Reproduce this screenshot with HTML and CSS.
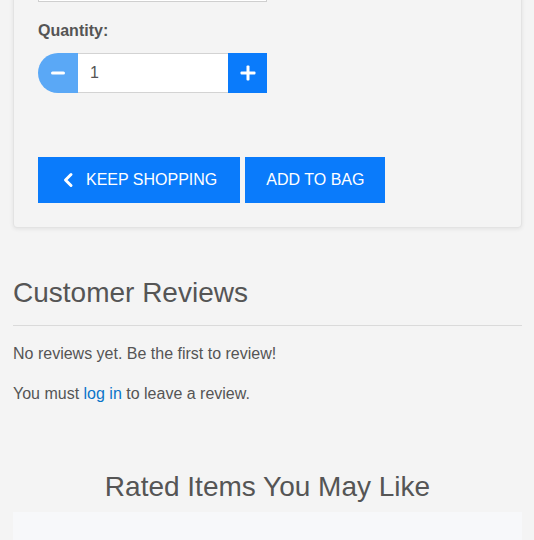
FILE: index.html
```html
<!DOCTYPE html>
<html>
<head>
<meta charset="utf-8">
<link rel="stylesheet" href="styles.css">
</head>
<body>
<div class="page">
  <div class="card">
    <div class="select"></div>
    <label class="qty-label">Quantity:</label>
    <div class="qty">
      <button class="qty-btn minus" aria-label="decrease">
        <svg width="16" height="16" viewBox="0 0 16 16"><rect x="1" y="6.5" width="14" height="3" rx="1.5" fill="#fff"/></svg>
      </button>
      <div class="qty-input">1</div>
      <button class="qty-btn plus" aria-label="increase">
        <svg width="18" height="18" viewBox="0 0 18 18"><rect x="1.5" y="7.5" width="15" height="3" rx="1" fill="#fff"/><rect x="7.5" y="1.5" width="3" height="15" rx="1" fill="#fff"/></svg>
      </button>
    </div>
    <div class="actions">
      <button class="btn keep">
        <svg class="chev" width="12" height="16" viewBox="0 0 12 16"><polyline points="9,2.5 3.5,8 9,13.5" fill="none" stroke="#fff" stroke-width="3" stroke-linecap="round" stroke-linejoin="round"/></svg>
        <span>KEEP SHOPPING</span>
      </button>
      <button class="btn add">ADD TO BAG</button>
    </div>
  </div>

  <section class="reviews">
    <h2 class="reviews-title">Customer Reviews</h2>
    <hr class="rule">
    <p class="text">No reviews yet. Be the first to review!</p>
    <p class="text">You must <a href="#" class="link">log in</a> to leave a review.</p>
  </section>

  <section class="rated">
    <h2 class="rated-title">Rated Items You May Like</h2>
    <div class="rated-box"></div>
  </section>
</div>
</body>
</html>
```

FILE: styles.css
```css
html, body {
  margin: 0;
  padding: 0;
  background: #f4f4f4;
  font-family: "Liberation Sans", Arial, sans-serif;
  color: #555;
  overflow: hidden;
}

.page {
  margin: 0 12px 0 13px;
}

.card {
  margin-top: -60px;
  padding: 21px 24px 24px;
  border: 1px solid #e3e3e3;
  border-radius: 4px;
  box-shadow: 0 1px 4px rgba(0, 0, 0, 0.08);
  background: #f4f4f4;
}

.select {
  width: 229px;
  height: 40px;
  box-sizing: border-box;
  background: #fff;
  border: 1px solid #cfcfcf;
}

.qty-label {
  display: block;
  margin-top: 19px;
  font-size: 16px;
  line-height: 20px;
  font-weight: bold;
  color: #555;
}

.qty {
  display: flex;
  margin-top: 12px;
  height: 40px;
  width: 229px;
}

.qty-btn {
  display: flex;
  align-items: center;
  justify-content: center;
  border: 0;
  padding: 0;
  height: 40px;
}

.minus {
  width: 40px;
  background: #5aa8f6;
  border-radius: 20px 0 0 20px;
}

.plus {
  width: 39px;
  background: #0a7bfb;
}

.qty-input {
  width: 150px;
  box-sizing: border-box;
  background: #fff;
  border-top: 1px solid #d3d3d3;
  border-bottom: 1px solid #d3d3d3;
  padding-left: 12px;
  font-size: 16px;
  line-height: 38px;
  color: #555;
}

.actions {
  display: flex;
  gap: 5px;
  margin-top: 64px;
}

.btn {
  display: flex;
  align-items: center;
  height: 46px;
  border: 0;
  background: #0a7bfb;
  color: #fff;
  font-family: "Liberation Sans", Arial, sans-serif;
  font-size: 16px;
  padding: 0 21px;
}

.keep {
  padding: 0 23px 0 24px;
}

.chev {
  margin-right: 12px;
}

.reviews-title,
.rated-title {
  font-size: 28px;
  line-height: 34px;
  font-weight: normal;
  color: #555;
  margin: 0;
}

.reviews-title {
  margin-top: 48px;
}

.rule {
  margin: 15px 0 0;
  border: 0;
  border-top: 1px solid #dadada;
}

.text {
  margin: 16px 0 0;
  font-size: 16px;
  line-height: 24px;
}

.link {
  color: #0b74c9;
  text-decoration: none;
}

.rated-title {
  margin-top: 64px;
  text-align: center;
}

.rated-box {
  margin-top: 8px;
  height: 60px;
  background: #f7f8fa;
}
```
